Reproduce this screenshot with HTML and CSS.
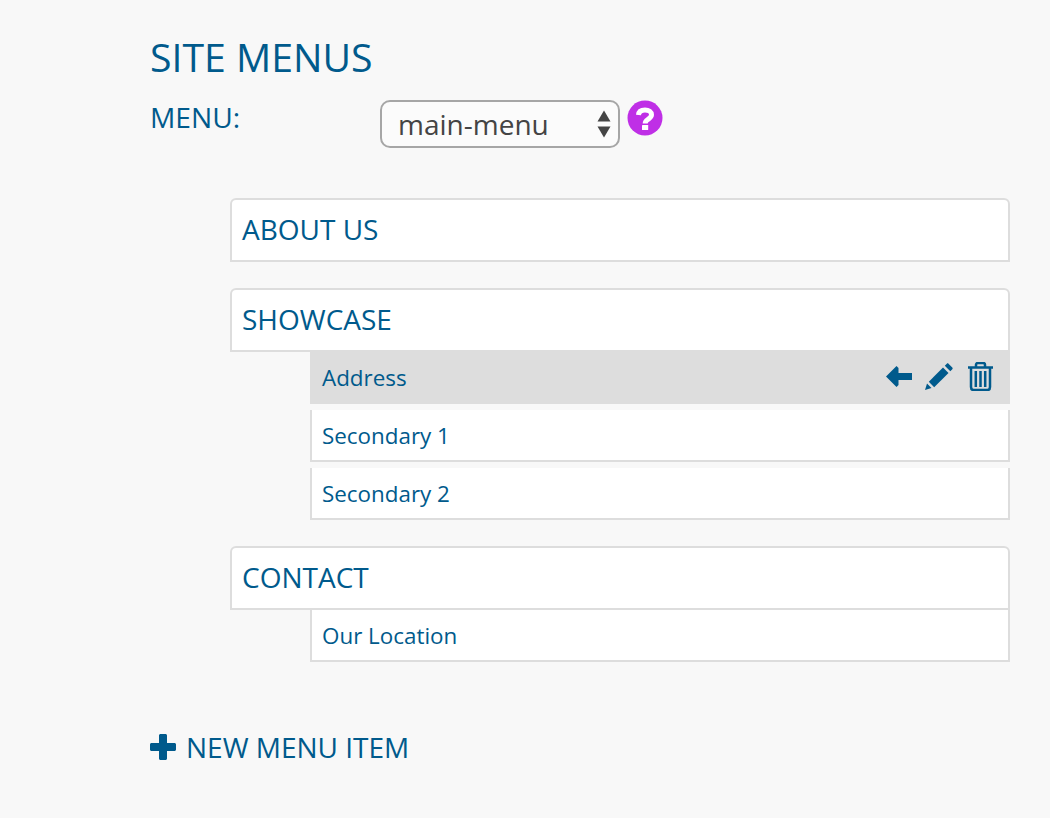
FILE: index.html
```html
<!DOCTYPE html>
<html lang="en">
<head>
<meta charset="utf-8">
<title>Site Menus</title>
<link rel="stylesheet" href="styles.css">
</head>
<body>
<main class="page">
  <h1 class="title">SITE MENUS</h1>
  <div class="menu-picker">
    <label class="menu-label" for="menu">MENU:</label>
    <div class="select-wrap">
      <select class="select" id="menu"><option>main-menu</option></select>
      <svg class="select-arrows" width="14" height="28" viewBox="0 0 14 28"><path d="M7 0.5 13.5 11.5H0.5Z"/><path d="M0.5 16.5H13.5L7 27.5Z"/></svg>
    </div>
    <svg class="help" width="36" height="36" viewBox="0 0 36 36"><circle cx="18" cy="18" r="17.5" fill="#bf2fe6"/><path d="M11.5 15C11.8 11.5 14.5 10 18 10C21.8 10 24.5 12 24.5 14.800C24.500 17 23 18 21.300 19.200C19.500 20.400 18.200 21 18.200 23.500" fill="none" stroke="#fff" stroke-width="5"/><rect x="15" y="25" width="6.200" height="5" rx=".6" fill="#fff"/></svg>
  </div>

  <ul class="tree">
    <li class="item">
      <div class="item-head">ABOUT US</div>
    </li>
    <li class="item">
      <div class="item-head">SHOWCASE</div>
      <ul class="children">
        <li class="child child-active">
          <span class="child-label">Address</span>
          <span class="actions">
            <svg width="26" height="21" viewBox="0 0 26 21"><path d="M0 10.500 10.500 0 12.500 2V7H26V14H12.500V19L10.500 21Z"/></svg>
            <svg width="28" height="27" viewBox="0 0 28 27"><path d="M0 27 2 20.500 6.500 25Z"/><path d="M3.800 18.800 18 4.500 23.500 10 9.200 24.200Z"/><path d="M19.800 2.700 21.800.7c.5-.5 1.200-.5 1.700 0l3.800 3.800c.5.500.5 1.200 0 1.700l-2 2z"/></svg>
            <svg class="trash" width="25" height="29" viewBox="0 0 25 29"><path d="M0 5.500H25M8 5V2.800C8 1.800 8.700 1 9.800 1H15.200C16.300 1 17 1.800 17 2.800V5M3 6V25C3 27 4 28 5.500 28H19.500C21 28 22 27 22 25V6M7.800 9V25M12.500 9V25M17.200 9V25"/></svg>
          </span>
        </li>
        <li class="child">Secondary 1</li>
        <li class="child">Secondary 2</li>
      </ul>
    </li>
    <li class="item">
      <div class="item-head">CONTACT</div>
      <ul class="children">
        <li class="child">Our Location</li>
      </ul>
    </li>
  </ul>

  <a class="new-item" href="#">
    <svg width="26" height="26" viewBox="0 0 26 26"><path d="M9 1.500C9 .7 9.700 0 10.500 0H15.500C16.300 0 17 .7 17 1.500V9H24.500C25.300 9 26 9.700 26 10.500V15.500C26 16.300 25.300 17 24.500 17H17V24.500C17 25.300 16.300 26 15.500 26H10.500C9.700 26 9 25.300 9 24.500V17H1.500C.7 17 0 16.300 0 15.500V10.500C0 9.700 .7 9 1.500 9H9Z"/></svg>
    <span>NEW MENU ITEM</span>
  </a>
</main>
</body>
</html>
```
FILE: styles.css
```css
* { box-sizing: border-box; }
html, body { margin: 0; }
body {
  background: #f8f8f8;
  color: #005a8c;
  font-family: "Open Sans", "Noto Sans", sans-serif;
  height: 818px;
  overflow: hidden;
}
.page { width: 1010px; padding: 32px 0 0 150px; }
.title { margin: 0; font-size: 39.2px; font-weight: 400; line-height: 50px; }
.menu-picker { display: flex; align-items: flex-start; margin-top: 18px; }
.menu-label { width: 230px; font-size: 28.200px; line-height: 34px; }
.select-wrap { position: relative; width: 240px; height: 48px; }
.select {
  appearance: none;
  display: block;
  width: 100%;
  height: 100%;
  padding: 0 16px;
  background: #fbfbfb;
  border: 2px solid #a6a6a6;
  border-radius: 10px;
  color: #444;
  font: 400 28px "Open Sans", sans-serif;
}
.select-arrows { position: absolute; right: 9px; top: 10px; fill: #444; pointer-events: none; }
.help { margin-left: 7px; }
.tree, .children { list-style: none; margin: 0; padding: 0; }
.tree { display: flex; flex-direction: column; gap: 26px; margin: 50px 0 0 80px; }
.item-head {
  height: 64px;
  padding-left: 10px;
  background: #fff;
  border: 2px solid #ddd;
  border-radius: 6px 6px 0 0;
  font-size: 28px;
  line-height: 59px;
}
.children { display: flex; flex-direction: column; gap: 6px; margin-left: 80px; }
.child {
  display: flex;
  align-items: center;
  justify-content: space-between;
  height: 52px;
  padding-left: 10px;
  background: #fff;
  border: solid #ddd;
  border-width: 0 2px 2px 2px;
  font-size: 22.400px;
}
.child-active {
  position: relative;
  height: 54px;
  margin-top: -2px;
  padding-right: 15px;
  background: #ddd;
}
.child-label { padding-top: 2px; }
.actions { display: flex; align-items: center; gap: 13px; fill: #005a8c; }
.trash { margin-left: 2px; fill: none; stroke: #005a8c; stroke-width: 2.500; }
.new-item {
  display: flex;
  align-items: center;
  gap: 10px;
  margin-top: 66px;
  color: #005a8c;
  fill: #005a8c;
  font-size: 28px;
  line-height: 38px;
  text-decoration: none;
}
```
